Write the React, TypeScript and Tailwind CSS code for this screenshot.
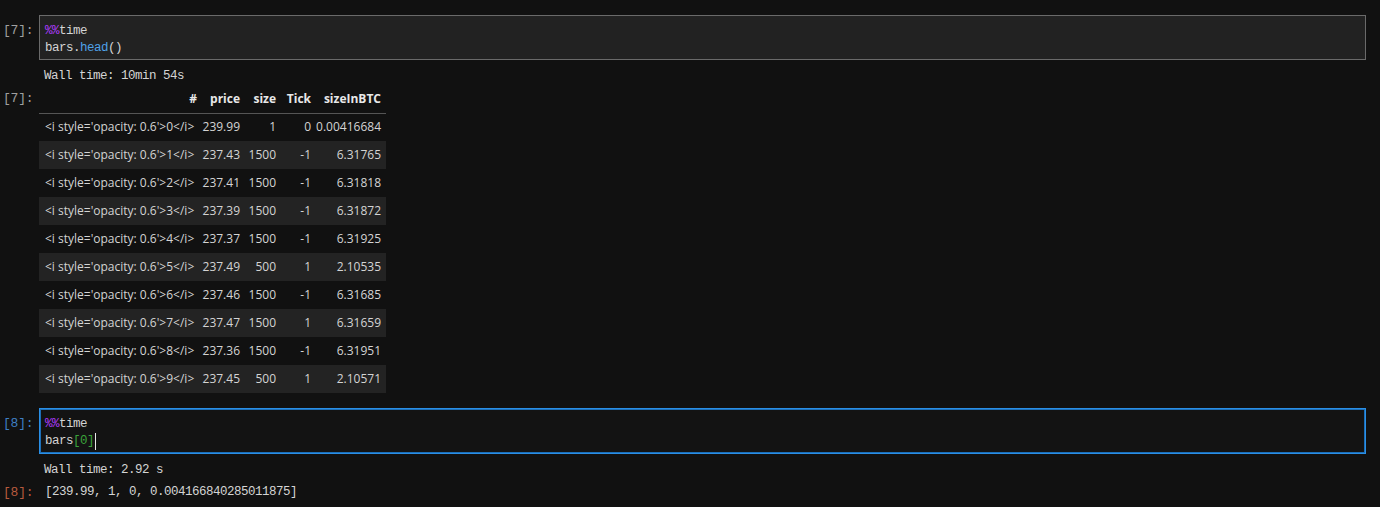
import React from "react";

const mono = "font-['Liberation_Mono','DejaVu_Sans_Mono',monospace] text-[12.5px] tracking-[-0.5px] leading-[17px]";
const promptFont = "font-['Liberation_Mono','DejaVu_Sans_Mono',monospace] text-[13px] tracking-[-0.2px] leading-[17px]";
const sans = "font-['Open_Sans','Noto_Sans',sans-serif] text-[12px]";

const rows = [
  [239.99, "1", "0", "0.00416684"],
  [237.43, "1500", "-1", "6.31765"],
  [237.41, "1500", "-1", "6.31818"],
  [237.39, "1500", "-1", "6.31872"],
  [237.37, "1500", "-1", "6.31925"],
  [237.49, "500", "1", "2.10535"],
  [237.46, "1500", "-1", "6.31685"],
  [237.47, "1500", "1", "6.31659"],
  [237.36, "1500", "-1", "6.31951"],
  [237.45, "500", "1", "2.10571"],
];

function Prompt({ label, color }: { label: string; color: string }) {
  return (
    <div className={`w-[39px] shrink-0 pl-[3px] ${promptFont} ${color}`}>{label}</div>
  );
}

export default function App() {
  return (
    <div className="min-h-[507px] bg-[#111111] pt-[15px] pr-[14px] text-[#d4d4d4]">
      {/* cell 7 */}
      <div className="flex">
        <Prompt label="[7]:" color="text-[#a0a0a0] pt-[7px]" />
        <div className={`flex-1 border border-[#6a6a6a] bg-[#222222] px-[5px] pt-[7px] pb-[2px] ${mono}`}>
          <div>
            <span className="text-[#b03cff]">%%</span>time
          </div>
          <div>
            bars.<span className="text-[#4ea1e8]">head</span>()
          </div>
        </div>
      </div>
      <div className="flex pt-[8px]">
        <div className="w-[39px] shrink-0" />
        <div className={`pl-[5px] ${mono}`}>Wall time: 10min 54s</div>
      </div>
      <div className="flex">
        <Prompt label="[7]:" color="text-[#a0a0a0] pt-[5px]" />
        <table className={`table-fixed border-collapse ${sans}`}>
          <colgroup>
            <col className="w-[163px]" />
            <col className="w-[43px]" />
            <col className="w-[36px]" />
            <col className="w-[35px]" />
            <col className="w-[70px]" />
          </colgroup>
          <thead>
            <tr className="h-[28px] border-b border-[#555555] font-bold text-[#e8e8e8]">
              <th className="pr-[5px] text-right">#</th>
              <th className="pr-[5px] text-right">price</th>
              <th className="pr-[5px] text-right">size</th>
              <th className="pr-[5px] text-right">Tick</th>
              <th className="pr-[5px] text-right">sizeInBTC</th>
            </tr>
          </thead>
          <tbody>
            {rows.map((r, i) => (
              <tr key={i} className={`h-[28px] ${i % 2 === 1 ? "bg-[#232323]" : ""}`}>
                <td className="whitespace-nowrap pl-[6px] text-left">
                  &lt;i style='opacity: 0.6'&gt;{i}&lt;/i&gt;
                </td>
                <td className="pr-[5px] text-right">{r[0].toFixed(2)}</td>
                <td className="pr-[5px] text-right">{r[1]}</td>
                <td className="pr-[5px] text-right">{r[2]}</td>
                <td className="pr-[5px] text-right">{r[3]}</td>
              </tr>
            ))}
          </tbody>
        </table>
      </div>

      {/* cell 8 */}
      <div className="mt-[15px] flex">
        <Prompt label="[8]:" color="text-[#3f7fc4] pt-[7px]" />
        <div className={`flex-1 border border-[#2a8fe6] bg-[#131313] px-[5px] pt-[7px] pb-[3px] shadow-[inset_0_0_0_1px_#1d6fb8] ${mono}`}>
          <div>
            <span className="text-[#b03cff]">%%</span>time
          </div>
          <div className="flex items-center">
            bars<span className="text-[#3aa23a]">[</span>
            <span className="text-[#3aa23a]">0</span>
            <span className="text-[#3aa23a]">]</span>
            <span className="ml-px inline-block h-[17px] w-px bg-[#e8e8e8]" />
          </div>
        </div>
      </div>
      <div className="flex pt-[8px]">
        <div className="w-[39px] shrink-0" />
        <div className={`pl-[5px] ${mono}`}>Wall time: 2.92 s</div>
      </div>
      <div className="flex pt-[5px]">
        <Prompt label="[8]:" color="text-[#b85a3e]" />
        <div className={`pl-[6px] ${mono}`}>[239.99, 1, 0, 0.004166840285011875]</div>
      </div>
    </div>
  );
}
